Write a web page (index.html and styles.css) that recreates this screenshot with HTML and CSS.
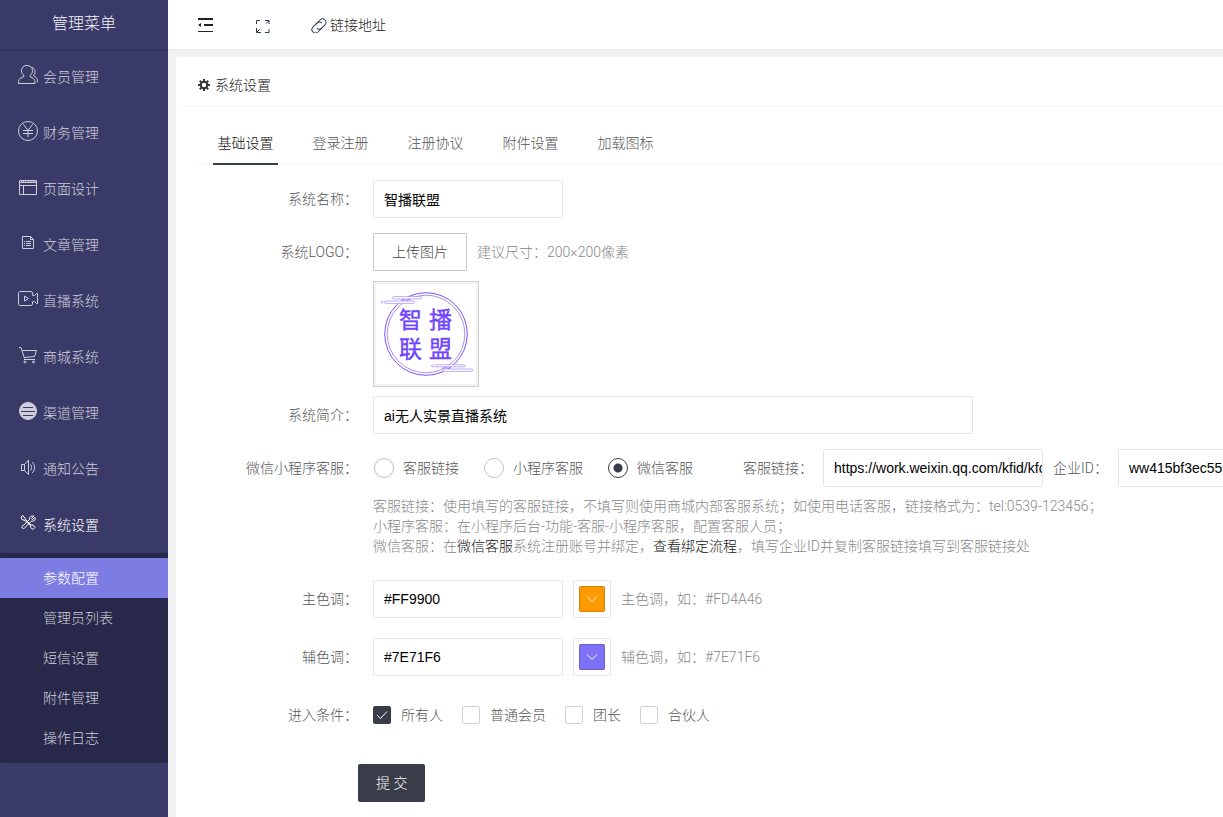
FILE: index.html
```html
<!DOCTYPE html>
<html lang="zh-CN">
<head>
<meta charset="utf-8">
<title>系统设置</title>
<link rel="stylesheet" href="styles.css">
</head>
<body>
<div class="app">
  <aside class="sidebar">
    <div class="brand">管理菜单</div>
    <nav class="menu">
      <a class="menu-item" href="#"><svg class="icon" viewBox="0 0 20 20"><path d="M9 .5C5.500.5 3.500 2.500 3.500 5.500c0 2.500.8 4 2.500 5v1L2 13.500C.8 14.500.5 16 .5 18.500h16.500c0-2.500-.3-4-1.500-5l-3.500-2v-1c1.500-1 2.500-2.500 2.500-5C14.500 2.500 12 .5 9 .5z"/><path d="M14 2.500c3.500 1 4 5 1.500 8l2.500 2c1.200 1 1.500 2.500 1.500 5"/></svg>会员管理</a>
      <a class="menu-item" href="#"><svg class="icon" viewBox="0 0 20 20"><circle cx="10" cy="10" r="9.500"/><path d="M5.500 3.500l4.500 6 4.500-6M10 9.500V16M5 9.500h10M5 12.500h10"/></svg>财务管理</a>
      <a class="menu-item" href="#"><svg class="icon" viewBox="0 0 20 20"><path d="M1.500 3.500h17v14h-17zM1.500 8.500h17M5.500 8.500v9"/><path d="M9 5h10M2 5.500h17"/><path d="M3 4.500h6" stroke-dasharray="1 1"/></svg>页面设计</a>
      <a class="menu-item" href="#"><svg class="icon" viewBox="0 0 20 20"><path d="M4.500 3.500h8l3 3v9h-11zM12.500 3.500v3h3M8 8.500h5M8 10.500h5M8 12.500h5M6 8.500h1M6 10.500h1M6 12.500h1"/></svg>文章管理</a>
      <a class="menu-item" href="#"><svg class="icon" viewBox="0 0 20 20"><path d="M14.500 6v-2l-1-1.500h-12l-1 1v12l1 1h12l1-1.500v-2M14.500 6.500h2l2-2h1v10h-1l-2-2h-2M6.500 7v5l4-2.500z"/></svg>直播系统</a>
      <a class="menu-item" href="#"><svg class="icon" viewBox="0 0 20 20"><path d="M1 2.500h2l3.500 11M4.500 5.500h14l-2 6-10 1M6 14.500h11"/><circle cx="7" cy="17" r="1"/><circle cx="15.500" cy="17" r="1"/></svg>商城系统</a>
      <a class="menu-item" href="#"><svg class="icon" viewBox="0 0 20 20"><circle class="solid" cx="10" cy="10" r="8.500"/><path class="cut" d="M5 6.500h10M3 10.500h14M5 14.500h10"/></svg>渠道管理</a>
      <a class="menu-item" href="#"><svg class="icon" viewBox="0 0 20 20"><path d="M3.500 7.500h3v6h-3zM6.500 7.500l4-4.500v14.500l-4-4M12.500 7.500c1.500 2 1.500 4.500 0 6M14 5c3.500 3 3.500 8 0 11"/></svg>通知公告</a>
      <a class="menu-item menu-item-open" href="#"><svg class="icon" viewBox="0 0 20 20"><path d="M3 4l2-1.500 3 4.500 5 5 2 0 2 2.500-2 2-2.500-2 0-2-5.500-5-3-1zM16 3l-2.500 2.500 1 1L17 4.500c1 2.500-1 4-3.500 3.500l-8 8-2-2 8-7.500c-.5-2.500 1.500-4 4.500-3.500z"/></svg>系统设置</a>
      <div class="submenu">
        <a class="submenu-item submenu-active" href="#">参数配置</a>
        <a class="submenu-item" href="#">管理员列表</a>
        <a class="submenu-item" href="#">短信设置</a>
        <a class="submenu-item" href="#">附件管理</a>
        <a class="submenu-item" href="#">操作日志</a>
      </div>
    </nav>
  </aside>
  <div class="main">
    <header class="topbar">
      <button class="tool" type="button" aria-label="收起菜单"><svg class="tool-icon" viewBox="0 0 16 16"><path class="bar" d="M1 2h15M7 8h9"/><path d="M1 14.500h15"/><path class="fill" d="M1 8l3-2v4z"/></svg></button>
      <button class="tool" type="button" aria-label="全屏"><svg class="tool-icon" viewBox="0 0 16 16"><path class="frame" d="M2.500 7V3.500H6M11 3.500h4V7M2.500 11v4.500H7M15 12v3.500h-4M12 6.500l3-3M2.500 15.500l3-3"/></svg></button>
      <a class="tool-link" href="#"><svg class="tool-icon" viewBox="0 0 16 16"><g class="frame" transform="rotate(-45 8 9)"><path d="M9 12.500H3a3.500 3.500 0 0 1 0-7h6a3.500 3.500 0 0 1 3 3.500"/><path d="M7 5.500h6a3.500 3.500 0 0 1 0 7H8a3.500 3.500 0 0 1-3-3.500"/></g></svg>链接地址</a>
    </header>
    <main class="panel">
      <h1 class="panel-title"><svg class="gear" viewBox="0 0 12 12"><circle cx="6" cy="6" r="3.200"/><path d="M6 0v2M6 10v2M0 6h2M10 6h2M1.800 1.800l1.400 1.400M8.800 8.800l1.400 1.400M1.800 10.200l1.400-1.400M8.800 3.200l1.400-1.400"/></svg>系统设置</h1>
      <nav class="tabs">
        <a class="tab tab-active" href="#">基础设置</a>
        <a class="tab" href="#">登录注册</a>
        <a class="tab" href="#">注册协议</a>
        <a class="tab" href="#">附件设置</a>
        <a class="tab" href="#">加载图标</a>
      </nav>
      <form class="form">
        <div class="row">
          <label class="label" for="name">系统名称：</label>
          <input class="input input-medium" id="name" type="text" value="智播联盟">
        </div>
        <div class="row row-logo">
          <label class="label" for="upload">系统LOGO：</label>
          <div class="stack">
            <div class="line"><button class="upload" id="upload" type="button">上传图片</button><span class="hint">建议尺寸：200×200像素</span></div>
            <div class="logo-frame">
              <svg class="logo" viewBox="0 0 100 100" role="img" aria-label="智播联盟">
                <circle class="ring" cx="50" cy="50" r="41.300"/>
                <circle class="ring ring-thin" cx="50" cy="50" r="38.800"/>
                <g class="cloud"><rect x="16.500" y="12.500" width="29" height="2.400" rx="1.200"/><rect x="8.500" y="17" width="30" height="2.400" rx="1.200"/><circle cx="6" cy="18.300" r="1"/><path d="M27 16h8"/><rect x="59" y="80.800" width="30" height="2" rx="1"/><rect x="67" y="85" width="30" height="2.400" rx="1.200"/><circle cx="56.500" cy="82" r="1"/><path d="M66 84h9"/></g>
                <text class="logo-text" x="23" y="44">智</text><text class="logo-text" x="53" y="44">播</text>
                <text class="logo-text" x="23" y="73">联</text><text class="logo-text" x="53" y="73">盟</text>
              </svg>
            </div>
          </div>
        </div>
        <div class="row">
          <label class="label" for="intro">系统简介：</label>
          <input class="input input-long" id="intro" type="text" value="ai无人实景直播系统">
        </div>
        <div class="row row-service">
          <span class="label">微信小程序客服：</span>
          <div class="stack">
            <div class="line">
              <div class="radios">
                <label class="option"><input class="radio" type="radio" name="service">客服链接</label>
                <label class="option"><input class="radio" type="radio" name="service">小程序客服</label>
                <label class="option"><input class="radio" type="radio" name="service" checked>微信客服</label>
              </div>
              <label class="inline-label" for="link">客服链接：</label>
              <input class="input input-link" id="link" type="text" value="https://work.weixin.qq.com/kfid/kfc7d0a52e">
              <label class="inline-label" for="corp">企业ID：</label>
              <input class="input input-link" id="corp" type="text" value="ww415bf3ec55">
            </div>
            <p class="notes">客服链接：使用填写的客服链接，不填写则使用商城内部客服系统；如使用电话客服，链接格式为：tel:0539-123456；<br>小程序客服：在小程序后台-功能-客服-小程序客服，配置客服人员；<br>微信客服：在<a class="note-link" href="#">微信客服</a>系统注册账号并绑定，<a class="note-link" href="#">查看绑定流程</a>，填写企业ID并复制客服链接填写到客服链接处</p>
          </div>
        </div>
        <div class="row row-wide">
          <label class="label" for="primary">主色调：</label>
          <div class="line">
            <input class="input input-medium" id="primary" type="text" value="#FF9900">
            <button class="picker" type="button" aria-label="选择主色调"><span class="swatch swatch-orange"><svg class="chevron" viewBox="0 0 12 12"><path d="M1 3.500l5 5 5-5"/></svg></span></button>
            <span class="hint">主色调，如：#FD4A46</span>
          </div>
        </div>
        <div class="row row-wide">
          <label class="label" for="secondary">辅色调：</label>
          <div class="line">
            <input class="input input-medium" id="secondary" type="text" value="#7E71F6">
            <button class="picker" type="button" aria-label="选择辅色调"><span class="swatch swatch-violet"><svg class="chevron" viewBox="0 0 12 12"><path d="M1 3.500l5 5 5-5"/></svg></span></button>
            <span class="hint">辅色调，如：#7E71F6</span>
          </div>
        </div>
        <div class="row row-last">
          <span class="label">进入条件：</span>
          <div class="checks">
            <label class="option option-check"><span class="check"><input class="box" type="checkbox" checked><svg class="tick" viewBox="0 0 18 18"><path d="M4 9l3.500 3.500 6.500-7"/></svg></span>所有人</label>
            <label class="option option-check"><input class="box" type="checkbox">普通会员</label>
            <label class="option option-check"><input class="box" type="checkbox">团长</label>
            <label class="option option-check"><input class="box" type="checkbox">合伙人</label>
          </div>
        </div>
        <button class="submit" type="submit">提 交</button>
      </form>
    </main>
  </div>
</div>
</body>
</html>
```
FILE: styles.css
```css
* { box-sizing: border-box; }
body {
  margin: 0;
  background: #f2f2f2;
  color: #555;
  font: 300 14px/20px Roboto, "Noto Sans CJK SC", sans-serif;
  overflow-x: hidden;
}
a { color: inherit; text-decoration: none; }
button, input { font: inherit; margin: 0; }
svg { flex: none; display: block; }

.app { display: flex; min-height: 100vh; }

.sidebar { flex: none; width: 168px; background: #3a3a69; color: #cfcfdb; }
.brand {
  height: 49px;
  line-height: 48px;
  text-align: center;
  font-size: 16px;
  color: #f2f2f6;
  box-shadow: 0 1px 2px rgba(0, 0, 0, .2);
}
.menu-item { display: flex; align-items: center; height: 56px; padding-left: 18px; gap: 5px; }
.menu-item-open { color: #fff; }
.icon { width: 20px; height: 20px; margin-bottom: 4px; fill: none; stroke: currentColor; stroke-width: 1; }
.icon .solid { fill: currentColor; }
.icon .cut { stroke: #3a3a69; }
.submenu { padding: 5px 0; background: #28284a; border-radius: 2px; }
.submenu-item { display: block; line-height: 40px; padding-left: 43px; }
.submenu-active { background: #7d7ce3; color: #fff; }

.main { flex: 1; min-width: 0; display: flex; flex-direction: column; gap: 7px; }
.topbar {
  display: flex;
  align-items: center;
  height: 50px;
  padding-left: 29px;
  gap: 41px;
  background: #fff;
  border-bottom: 1px solid #e8e8e8;
  color: #222;
}
.tool { display: flex; padding: 0; border: 0; background: none; color: inherit; }
.tool-icon { width: 16px; height: 16px; fill: none; stroke: currentColor; }
.tool-icon .bar { stroke-width: 2; }
.tool-icon .fill { fill: currentColor; stroke: none; }
.tool-icon .frame { stroke: #2b3d50; }
.tool-link { display: flex; align-items: center; gap: 3px; }

.panel { flex: 1; margin-left: 8px; padding-left: 7px; background: #fff; border-radius: 2px 0 0 0; overflow: hidden; }
.panel-title {
  display: flex;
  align-items: center;
  gap: 5px;
  height: 50px;
  margin: 0;
  padding: 6px 0 0 15px;
  border-bottom: 1px solid #f6f6f6;
  font-size: 14px;
  font-weight: 300;
  color: #222;
}
.gear { width: 12px; height: 12px; fill: none; stroke: #333; stroke-width: 2; }
.tabs { display: flex; gap: 30px; margin: 17px 0 0 15px; padding-left: 15px; height: 41px; border-bottom: 1px solid #f6f6f6; }
.tab { min-width: 65px; height: 41px; line-height: 38px; text-align: center; }
.tab-active { color: #111; border-bottom: 2px solid #393d49; }

.form { padding: 15px 0 15px 15px; }
.row { display: flex; margin-bottom: 15px; }
.row-logo { margin-bottom: 9px; }
.row-service { margin-bottom: 24px; }
.row-wide { margin-bottom: 20px; }
.row-last { margin-bottom: 30px; }
.label { flex: none; width: 175px; padding-right: 15px; line-height: 38px; text-align: right; white-space: nowrap; }
.line { display: flex; align-items: center; gap: 10px; white-space: nowrap; }
.input {
  height: 38px;
  padding: 0 0 0 10px;
  border: 1px solid #e6e6e6;
  border-radius: 2px;
  background: #fff;
  color: #000;
  font-family: "Liberation Sans", "Noto Sans CJK SC", sans-serif;
  font-weight: 400;
  flex: none;
}
.input-medium { width: 190px; }
.input-long { width: 600px; }
.input-link { width: 220px; }
.upload { height: 38px; padding: 0 18px; border: 1px solid #c9c9c9; border-radius: 2px; background: #fff; color: #444; }
.hint { color: #888; }
.logo-frame { width: 106px; height: 106px; margin-top: 10px; padding: 2px; border: 1px solid #d2d2d2; background: #f2f2f2; }
.logo { width: 100%; height: 100%; background: #fff; }
.ring { fill: none; stroke: #7a55f7; stroke-width: 1; }
.ring-thin { stroke: #a892fb; }
.cloud { fill: #fff; stroke: #9478fa; stroke-width: .6; }
.logo-text { font: 400 23px "Liberation Sans", "Noto Sans CJK SC", sans-serif; fill: #6f45ff; stroke: #6f45ff; stroke-width: .4; }

.radios { display: flex; gap: 25px; margin: 0 40px 0 1px; }
.option { display: flex; align-items: center; gap: 9px; }
.radio {
  appearance: none;
  width: 20px;
  height: 20px;
  border: 1px solid #c2c2c2;
  border-radius: 50%;
  background: #fff;
}
.radio:checked { border-color: #393d49; background: radial-gradient(circle, #393d49 4px, #fff 5px); }
.inline-label { flex: none; }
.notes { margin: 9px 0 0; color: #888; white-space: nowrap; }
.note-link { color: #111; }

.picker { display: flex; width: 38px; height: 38px; padding: 5px; border: 1px solid #e6e6e6; border-radius: 2px; background: #fff; }
.swatch { display: flex; align-items: center; justify-content: center; width: 26px; height: 26px; border: 1px solid rgba(0, 0, 0, .15); border-radius: 2px; }
.swatch-orange { background: #f90; }
.swatch-violet { background: #7e71f6; }
.chevron { width: 12px; height: 12px; fill: none; stroke: #fff; }

.checks { display: flex; gap: 19px; height: 38px; }
.option-check { gap: 10px; }
.check { position: relative; display: flex; }
.box { appearance: none; width: 18px; height: 18px; border: 1px solid #d2d2d2; border-radius: 2px; background: #fff; }
.box:checked { border-color: #393d49; background: #393d49; }
.tick { position: absolute; inset: 0; fill: none; stroke: #fff; pointer-events: none; }
.submit { display: block; height: 38px; margin-left: 160px; padding: 0 18px; border: 0; border-radius: 2px; background: #393d49; color: #fff; }
```
